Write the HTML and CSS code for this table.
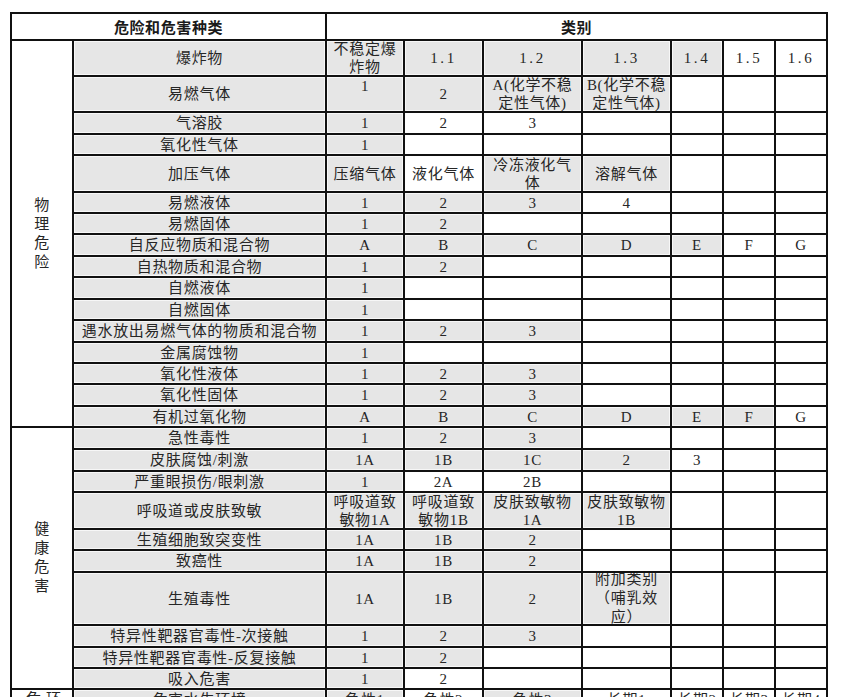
FILE: index.html
```html
<!DOCTYPE html>
<html lang="zh-CN">
<head>
<meta charset="utf-8">
<title>危险和危害种类</title>
<link rel="stylesheet" href="styles.css">
</head>
<body>
<div class="sheet">
  <div class="c hd span2">危险和危害种类</div>
  <div class="c hd span7">类别</div>

  <div class="c cat cat-p">物<br>理<br>危<br>险</div>
  <div class="c g">爆炸物</div><div class="c g">不稳定爆<br>炸物</div><div class="c g num">1.1</div><div class="c g num">1.2</div><div class="c g num">1.3</div><div class="c g num">1.4</div><div class="c num">1.5</div><div class="c num">1.6</div>
  <div class="c g">易燃气体</div><div class="c g top">1</div><div class="c g">2</div><div class="c g">A(化学不稳<br>定性气体)</div><div class="c g">B(化学不稳<br>定性气体)</div><div class="c"></div><div class="c"></div><div class="c"></div>
  <div class="c g">气溶胶</div><div class="c g">1</div><div class="c">2</div><div class="c">3</div><div class="c"></div><div class="c"></div><div class="c"></div><div class="c"></div>
  <div class="c g">氧化性气体</div><div class="c g">1</div><div class="c"></div><div class="c"></div><div class="c"></div><div class="c"></div><div class="c"></div><div class="c"></div>
  <div class="c g">加压气体</div><div class="c g">压缩气体</div><div class="c">液化气体</div><div class="c g">冷冻液化气<br>体</div><div class="c g">溶解气体</div><div class="c"></div><div class="c"></div><div class="c"></div>
  <div class="c g">易燃液体</div><div class="c g">1</div><div class="c g">2</div><div class="c g">3</div><div class="c">4</div><div class="c"></div><div class="c"></div><div class="c"></div>
  <div class="c g">易燃固体</div><div class="c g">1</div><div class="c g">2</div><div class="c"></div><div class="c"></div><div class="c"></div><div class="c"></div><div class="c"></div>
  <div class="c g">自反应物质和混合物</div><div class="c g">A</div><div class="c g">B</div><div class="c g">C</div><div class="c g">D</div><div class="c g">E</div><div class="c">F</div><div class="c">G</div>
  <div class="c g">自热物质和混合物</div><div class="c g">1</div><div class="c g">2</div><div class="c"></div><div class="c"></div><div class="c"></div><div class="c"></div><div class="c"></div>
  <div class="c g">自燃液体</div><div class="c g">1</div><div class="c"></div><div class="c"></div><div class="c"></div><div class="c"></div><div class="c"></div><div class="c"></div>
  <div class="c g">自燃固体</div><div class="c g">1</div><div class="c"></div><div class="c"></div><div class="c"></div><div class="c"></div><div class="c"></div><div class="c"></div>
  <div class="c g">遇水放出易燃气体的物质和混合物</div><div class="c g">1</div><div class="c g">2</div><div class="c g">3</div><div class="c"></div><div class="c"></div><div class="c"></div><div class="c"></div>
  <div class="c g">金属腐蚀物</div><div class="c g">1</div><div class="c"></div><div class="c"></div><div class="c"></div><div class="c"></div><div class="c"></div><div class="c"></div>
  <div class="c g">氧化性液体</div><div class="c g">1</div><div class="c g">2</div><div class="c g">3</div><div class="c"></div><div class="c"></div><div class="c"></div><div class="c"></div>
  <div class="c g">氧化性固体</div><div class="c g">1</div><div class="c g">2</div><div class="c g">3</div><div class="c"></div><div class="c"></div><div class="c"></div><div class="c"></div>
  <div class="c g">有机过氧化物</div><div class="c g">A</div><div class="c g">B</div><div class="c g">C</div><div class="c g">D</div><div class="c g">E</div><div class="c g">F</div><div class="c">G</div>

  <div class="c cat cat-h">健<br>康<br>危<br>害</div>
  <div class="c g">急性毒性</div><div class="c g">1</div><div class="c g">2</div><div class="c g">3</div><div class="c"></div><div class="c"></div><div class="c"></div><div class="c"></div>
  <div class="c g">皮肤腐蚀/刺激</div><div class="c g">1A</div><div class="c g">1B</div><div class="c g">1C</div><div class="c g">2</div><div class="c">3</div><div class="c"></div><div class="c"></div>
  <div class="c g">严重眼损伤/眼刺激</div><div class="c g">1</div><div class="c">2A</div><div class="c">2B</div><div class="c"></div><div class="c"></div><div class="c"></div><div class="c"></div>
  <div class="c g">呼吸道或皮肤致敏</div><div class="c g">呼吸道致<br>敏物1A</div><div class="c g">呼吸道致<br>敏物1B</div><div class="c g">皮肤致敏物<br>1A</div><div class="c g">皮肤致敏物<br>1B</div><div class="c"></div><div class="c"></div><div class="c"></div>
  <div class="c g">生殖细胞致突变性</div><div class="c g">1A</div><div class="c g">1B</div><div class="c g">2</div><div class="c"></div><div class="c"></div><div class="c"></div><div class="c"></div>
  <div class="c g">致癌性</div><div class="c g">1A</div><div class="c g">1B</div><div class="c g">2</div><div class="c"></div><div class="c"></div><div class="c"></div><div class="c"></div>
  <div class="c g">生殖毒性</div><div class="c g">1A</div><div class="c g">1B</div><div class="c g">2</div><div class="c g tall">附加类别<br>（哺乳效<br>应）</div><div class="c"></div><div class="c"></div><div class="c"></div>
  <div class="c g">特异性靶器官毒性-次接触</div><div class="c g">1</div><div class="c g">2</div><div class="c g">3</div><div class="c"></div><div class="c"></div><div class="c"></div><div class="c"></div>
  <div class="c g">特异性靶器官毒性-反复接触</div><div class="c g">1</div><div class="c g">2</div><div class="c"></div><div class="c"></div><div class="c"></div><div class="c"></div><div class="c"></div>
  <div class="c g">吸入危害</div><div class="c g">1</div><div class="c">2</div><div class="c"></div><div class="c"></div><div class="c"></div><div class="c"></div><div class="c"></div>

  <div class="c env"><span class="env-cat">环境<br>危害</span></div>
  <div class="c g env">危害水生环境</div><div class="c g env">急性1</div><div class="c env">急性2</div><div class="c g env">急性3</div><div class="c env">长期1</div><div class="c env">长期2</div><div class="c env">长期3</div><div class="c env">长期4</div>
</div>
</body>
</html>
```

FILE: styles.css
```css
html, body {
  margin: 0;
  padding: 0;
  height: 697px;
  overflow: hidden;
  background: #ffffff;
}

.sheet {
  display: grid;
  width: max-content;
  margin: 12px 0 0 10px;
  padding: 2px;
  gap: 2px;
  background: #111111;
  grid-template-columns: 60px 251px 76px 77px 97px 87px 50px 50px 50px;
  grid-template-rows:
    25px
    34px 34px 20px 19px 35px 19px 19px 20px 19px 20px 19px 20px 19px 19px 20px 19px
    20px 20px 19px 35px 19px 20px 51px 20px 19px 19px
    30px;
  font-family: "Liberation Serif", "Noto Sans CJK SC", serif;
  font-size: 15px;
  color: #262626;
}

.c {
  background: #ffffff;
  display: flex;
  align-items: center;
  justify-content: center;
  text-align: center;
  overflow: hidden;
  line-height: 18px;
  letter-spacing: 0.7px;
  white-space: nowrap;
}

.g {
  background: #e6e6e6;
  box-shadow: inset 1px 1px 0 #f7f7f7, inset -1px -1px 0 #f7f7f7;
}

.hd {
  font-family: "Noto Sans CJK SC", sans-serif;
  font-weight: 700;
  font-size: 15px;
  color: #1a1a1a;
  letter-spacing: 0.6px;
}

.span2 { grid-column: span 2; }
.span7 { grid-column: span 7; }

.cat {
  line-height: 19px;
  font-size: 15px;
}
.cat-p { grid-row: span 16; }
.cat-h { grid-row: span 10; }

.num { letter-spacing: 2.6px; }

.top { align-items: flex-start; }

.tall { line-height: 19px; }

.env {
  align-items: flex-start;
  padding-top: 1px;
}

.env-cat {
  writing-mode: vertical-rl;
  line-height: 20px;
}
```
